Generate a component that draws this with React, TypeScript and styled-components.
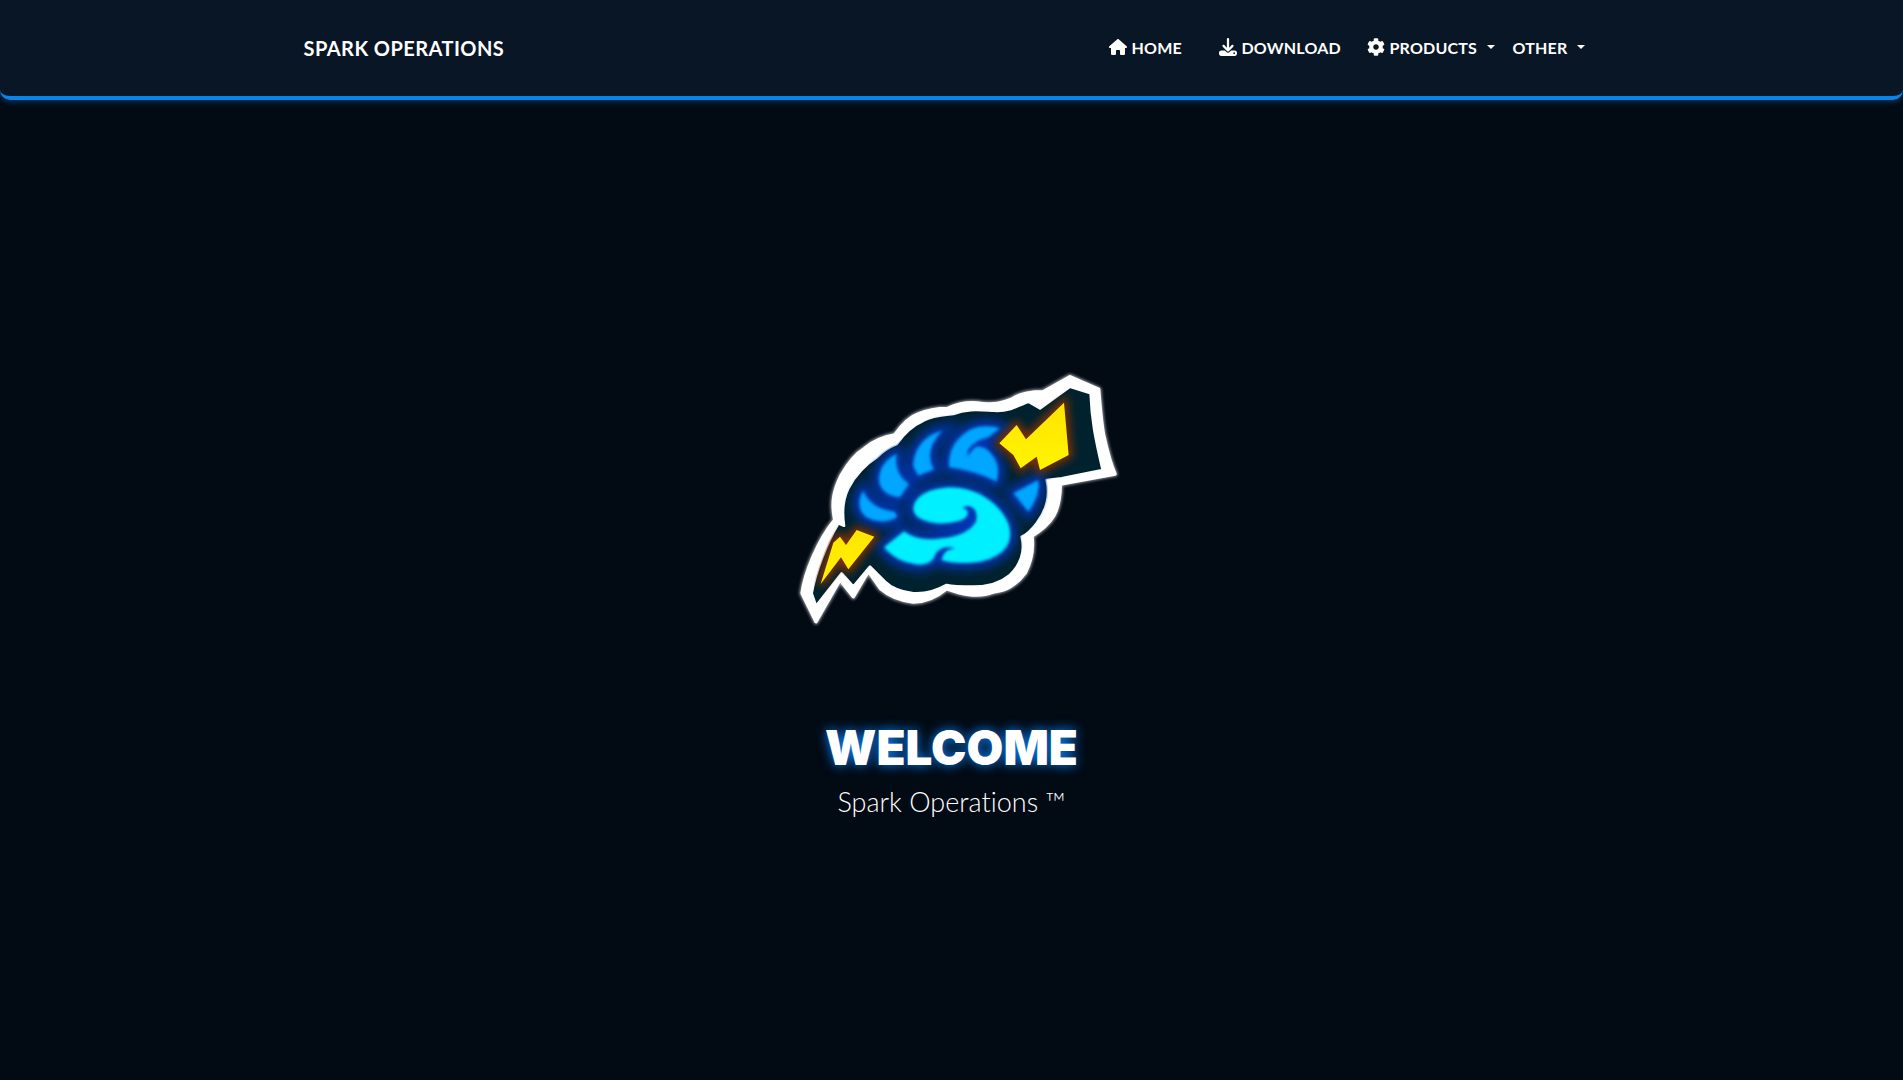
import React from 'react';
import styled, { createGlobalStyle } from 'styled-components';
import { FaCog } from 'react-icons/fa';
import { FaDownload, FaHouse } from 'react-icons/fa6';

const GlobalStyle = createGlobalStyle`
  html, body {
    margin: 0;
    padding: 0;
    background: #020a14;
  }
  body {
    font-family: "Lato", "Noto Sans", sans-serif;
    font-variant-ligatures: none;
    color: #fff;
  }
`;

const Page = styled.div`
  min-height: 1080px;
  background: #020a14;
  overflow: hidden;
`;

const Navbar = styled.nav`
  height: 96px;
  background: #081626;
  border-bottom: 4px solid #0a84e6;
  border-radius: 0 0 10px 10px;
  box-shadow: 0 2px 6px rgba(10, 132, 230, 0.35);
  display: flex;
  justify-content: center;
`;

const Container = styled.div`
  width: 1320px;
  padding: 0 12px;
  box-sizing: border-box;
  display: flex;
  align-items: center;
  justify-content: space-between;
`;

const Brand = styled.a`
  font-size: 20px;
  font-weight: 700;
  letter-spacing: 0.45px;
  color: #fff;
`;

const NavList = styled.ul`
  display: flex;
  align-items: center;
  list-style: none;
  margin: 0 0 2px;
  padding: 0;
`;

const NavItem = styled.li<{ $width: number }>`
  width: ${({ $width }) => $width}px;
`;

const NavLink = styled.a`
  display: flex;
  align-items: center;
  gap: 5px;
  height: 24px;
  font-size: 16px;
  font-weight: 700;
  letter-spacing: 0.2px;
  color: #fff;
  white-space: nowrap;

  svg {
    font-size: 18px;
  }
`;

const Caret = styled.span`
  width: 0;
  height: 0;
  margin-left: 5px;
  border-top: 4px solid #fff;
  border-left: 4px solid transparent;
  border-right: 4px solid transparent;
`;

const Hero = styled.main`
  display: flex;
  flex-direction: column;
  align-items: center;
  padding-top: 260px;
`;

const Logo = styled.svg`
  display: block;
  width: 360px;
  height: 280px;
  margin-left: 17px;
`;

const Title = styled.h1`
  margin: 80px 0 0;
  font-family: "Inter", "Lato", sans-serif;
  font-size: 47.5px;
  line-height: 56px;
  font-weight: 900;
  color: #fff;
  text-shadow: 0 0 12px #0a84ff;
`;

const Subtitle = styled.p`
  margin: 8px 0 0;
  font-family: "Lato", "Open Sans", sans-serif;
  font-size: 27px;
  line-height: 36px;
  font-weight: 300;
  color: #fff;
`;

const outerPath =
  'M108 785 L66 700 C74 640 114 540 164 480 C154 430 159 395 184 345 C204 310 229 280 254 265 C284 240 314 230 344 225 C369 190 389 170 414 162 C454 145 484 145 504 145 C544 125 574 125 604 130 C644 135 664 130 694 118 C719 100 749 95 790 95 L870 50 L956 88 C961 150 966 200 971 225 C981 270 991 310 1005 342 L841 372 C841 420 831 450 821 468 C806 493 781 513 756 528 C761 570 751 610 736 638 C706 678 676 691 640 696 C590 716 540 701 500 686 C470 711 435 726 400 726 C360 721 325 706 302 686 L265 634 L220 710 L180 660 Z';

const innerPath =
  'M108 738 L95 700 C105 640 140 550 175 490 L192 497 C185 450 190 415 205 385 C225 345 260 310 290 292 C310 272 330 260 350 252 C375 215 400 195 430 182 C460 165 490 165 520 162 C560 145 600 150 640 152 C680 155 700 145 745 125 L780 145 L870 80 L932 100 C935 180 945 230 968 330 L845 355 L800 360 C812 410 800 450 770 490 C755 510 740 525 725 530 C735 570 725 610 690 645 C660 670 620 680 580 680 C550 680 520 680 500 675 C465 695 430 702 400 700 C360 695 330 680 315 665 L270 620 L220 680 L185 640 Z';

const topShapes = [
  'M660 205 C630 195 590 195 560 215 C525 240 505 270 507 322 C560 328 610 345 650 365 C658 335 655 310 640 290 C625 265 600 255 585 262 L562 288 C560 262 590 240 625 232 Z',
  'M487 212 C440 222 400 262 400 320 L415 347 L462 328 C440 290 450 250 487 212 Z',
  'M350 282 C310 300 290 340 300 375 C310 400 335 410 360 412 L387 372 C355 350 345 320 350 282 Z',
  'M250 392 C230 420 235 460 265 475 C290 488 330 488 352 470 L345 455 C300 450 265 430 250 392 Z',
  'M775 360 L700 400 L745 455 C770 420 780 390 775 360 Z',
];

const swirlPath =
  'M400 445 C405 405 450 385 510 382 C590 382 660 430 685 490 C705 550 670 590 600 605 C560 612 510 610 485 600 C490 575 505 565 525 566 C500 555 475 565 465 585 C460 605 440 615 415 614 C370 610 335 590 312 562 L372 514 C400 535 440 542 485 535 C540 530 590 505 590 470 C590 445 570 430 545 445 C565 445 570 460 555 475 C530 490 480 495 445 485 C415 478 400 465 400 445 Z';

const bigBolt = 'M658 250 L710 195 L738 238 L852 128 L866 285 L780 330 L770 290 L722 325 L700 285 Z';
const smallBolt = 'M122 672 L160 548 L180 530 L198 555 L230 510 L283 530 L205 628 L183 592 Z';

const BrainLogo: React.FC = () => (
  <Logo viewBox="0 0 1080 840">
    <defs>
      <filter id="soft" x="-20%" y="-20%" width="140%" height="140%">
        <feGaussianBlur stdDeviation="12" />
      </filter>
      <filter id="wide" x="-20%" y="-20%" width="140%" height="140%">
        <feGaussianBlur stdDeviation="16" />
      </filter>
      <filter id="edge" x="-10%" y="-10%" width="120%" height="120%">
        <feGaussianBlur stdDeviation="5" />
      </filter>
      <filter id="tiny" x="-10%" y="-10%" width="120%" height="120%">
        <feGaussianBlur stdDeviation="1.5" />
      </filter>
      <clipPath id="inner">
        <path d={innerPath} />
      </clipPath>
      <linearGradient id="bolt" x1="0" y1="0" x2="0" y2="1">
        <stop offset="0" stopColor="#ffe400" />
        <stop offset="1" stopColor="#fff400" />
      </linearGradient>
    </defs>
    <path d={outerPath} fill="#fff" stroke="#fff" strokeWidth="16" strokeLinejoin="round" opacity="0.6" filter="url(#edge)" />
    <path d={outerPath} fill="#fff" stroke="#fff" strokeWidth="10" strokeLinejoin="round" filter="url(#tiny)" />
    <path d={innerPath} fill="#00222e" stroke="#fff" strokeWidth="8" strokeLinejoin="round" filter="url(#tiny)" />
    <g clipPath="url(#inner)">
      <g filter="url(#wide)" fill="#0034b4" stroke="#0034b4" strokeWidth="36">
        <path d={swirlPath} />
        {topShapes.map((d) => (
          <path key={d} d={d} />
        ))}
      </g>
      <g filter="url(#soft)" fill="#5a1a00" stroke="#8a3200" strokeWidth="20">
        <path d={bigBolt} />
        <path d={smallBolt} />
      </g>
    </g>
    <g filter="url(#edge)">
      {topShapes.map((d) => (
        <path key={d} d={d} fill="#00a6ff" />
      ))}
      <path d={swirlPath} fill="#00f0ff" />
    </g>
    <path d={bigBolt} fill="url(#bolt)" filter="url(#tiny)" />
    <path d={smallBolt} fill="url(#bolt)" filter="url(#tiny)" />
  </Logo>
);

const App: React.FC = () => (
  <Page>
    <GlobalStyle />
    <Navbar>
      <Container>
        <Brand>SPARK OPERATIONS</Brand>
        <NavList>
          <NavItem $width={110}>
            <NavLink>
              <FaHouse />
              HOME
            </NavLink>
          </NavItem>
          <NavItem $width={148}>
            <NavLink>
              <FaDownload />
              DOWNLOAD
            </NavLink>
          </NavItem>
          <NavItem $width={146}>
            <NavLink>
              <FaCog />
              PRODUCTS
              <Caret />
            </NavLink>
          </NavItem>
          <NavItem $width={87}>
            <NavLink>
              OTHER
              <Caret />
            </NavLink>
          </NavItem>
        </NavList>
      </Container>
    </Navbar>
    <Hero>
      <BrainLogo />
      <Title>WELCOME</Title>
      <Subtitle>Spark Operations ™</Subtitle>
    </Hero>
  </Page>
);

export default App;
